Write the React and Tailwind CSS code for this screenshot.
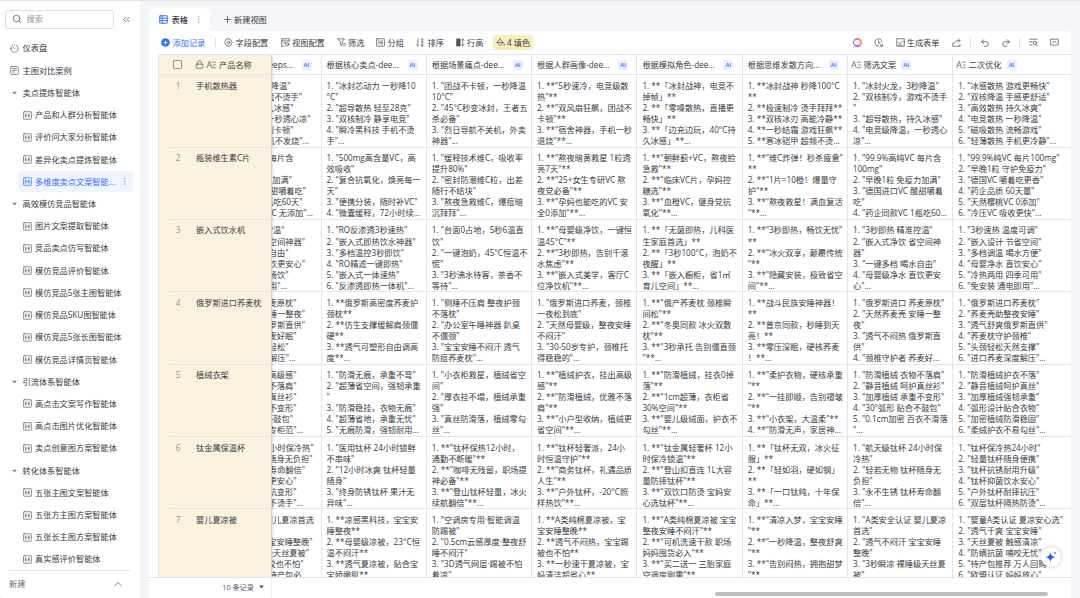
import React from 'react';
import {
  Search,
  ChevronsLeft,
  ChevronUp,
  MoreVertical,
  Plus,
  Undo2,
  Redo2,
  Lock
} from 'lucide-react';

const sidebarGroups = [
  {
    name: '卖点提炼智能体',
    items: ['产品和人群分析智能体', '评价问大家分析智能体', '差异化卖点提炼智能体', '多维度卖点文案智能...']
  },
  {
    name: '高效模仿竞品智能体',
    items: [
      '图片文案提取智能体',
      '竞品卖点仿写智能体',
      '模仿竞品评价智能体',
      '模仿竞品5张主图智能体',
      '模仿竞品SKU图智能体',
      '模仿竞品5张长图智能体',
      '模仿竞品详情页智能体'
    ]
  },
  {
    name: '引流体系智能体',
    items: ['高点击文案写作智能体', '高点击图片优化智能体', '卖点创意图方案智能体']
  },
  {
    name: '转化体系智能体',
    items: ['五张主图文案智能体', '五张方主图方案智能体', '五张长主图方案智能体', '真实感评价智能体']
  }
];

const activeItem = '多维度卖点文案智能...';

const columns = [
  { name: '根据核心卖点-dee...' },
  { name: '根据场景痛点-dee...' },
  { name: '根据人群画像-dee...' },
  { name: '根据模拟角色-dee...' },
  { name: '根据思维发散方向...' },
  { name: '筛选文案', text: true },
  { name: '二次优化', text: true }
];

// "scrolled" holds the visible tail of the column under the frozen one: [text, gap to the right border]
const rows = [
  {
    name: '手机散热器',
    scrolled: [['降温"', 30], ['戏不烫手"', 18.5], ['久冰感"', 27], ['一秒透心凉"', 10], ['别卡顿"', 27], ['机不发烧"...', 11.5]],
    cells: [
      ['1. "冰封芯动力 一秒降10', '°C"', '2. "超导散热 轻至28克"', '3. "双核制冷 静享电竞"', '4. "瞬冷黑科技 手机不烫', '手"...'],
      ['1. "团战不卡顿，一秒降温', '10°C"', '2. "45°C秒变冰封，王者五', '杀必备"', '3. "烈日导航不关机，外卖', '神器"...'],
      ['1. **"5秒速冷，电竞级散', '热"**', '2. **"双风扇狂飙，团战不', '卡顿"**', '3. **"宿舍神器，手机一秒', '退烧"**...'],
      ['1. **「冰封战神，电竞不', '掉帧」**', '2. **「零噪散热，直播更', '畅快」**', '3. **「边充边玩，40°C持', '久冰感」**...'],
      ['1. **冰封战神 秒降100°C', '**', '2. **极速制冷 烫手拜拜**', '3. **双核冰刃 高能冷静**', '4. **一秒结霜 游戏狂飙**', '5. **寒冰铠甲 超频不烫...'],
      ['1. "冰封火龙，3秒降温"', '2. "双核制冷，游戏不烫手', '"', '3. "超导散热，持久冰感"', '4. "电竞级降温，一秒透心', '凉"...'],
      ['1. "冰感散热 游戏更畅快"', '2. "双核降温 手感更舒适"', '3. "高效散热 持久冰爽"', '4. "电竞散热 一秒降温"', '5. "磁吸散热 流畅游戏"', '6. "轻薄散热 手机更冷静"...']
    ]
  },
  {
    name: '瓶装维生素C片',
    scrolled: [['每片含', 27], ['', 0], ['力加满"', 28.5], ['酸甜嚼着吃"', 14.5], ['瓶吃60天"', 18], ['VC 无添加"...', 7.5]],
    cells: [
      ['1. "500mg高含量VC，高', '效吸收"', '2. "复合抗氧化，焕亮每一', '天"', '3. "便携分装，随时补VC"', '4. "微囊缓释，72小时续...'],
      ['1. "缓释技术维C，吸收率', '提升80%"', '2. "密封防潮维C粒，出差', '随行不结块"', '3. "熬夜急救维C，爆痘暗', '沉拜拜"...'],
      ['1. **"熬夜暗黄救星 1粒透', '亮7天"**', '2. **"25+女生专研VC 熬', '夜党必备"**', '3. **"孕妈也能吃的VC 安', '全0添加"**...'],
      ['1. **"朝鲜蓟+VC，熬夜脸', '急救"**', '2. **"临床VC片，孕妈控', '糖选"**', '3. **"血橙VC，健身党抗', '氧化"**...'],
      ['1. **"维C炸弹！秒杀疲惫"', '**', '2. **"1片=10橙！爆量守', '护"**', '3. **"熬夜救星！满血复活', '"**...'],
      ['1. "99.9%高纯VC 每片含', '100mg"', '2. "早晚1粒 免疫力加满"', '3. "德国进口VC 酸甜嚼着', '吃"', '4. "药企同款VC 1瓶吃60...'],
      ['1. "99.9%纯VC 每片100mg"', '2. "早晚1粒 守护免疫力"', '3. "德国VC 嚼着吃更香"', '4. "药企品质 60天量"', '5. "天然樱桃VC 0添加"', '6. "冷压VC 吸收更快"...']
    ]
  },
  {
    name: '嵌入式饮水机',
    scrolled: [['控温"', 36], ['空间神器"', 15.5], ['自由"', 32], ['饮更安心"', 15.5], ['畅饮"', 32], ['用"...', 33.5]],
    cells: [
      ['1. "RO反渗透3秒速热"', '2. "嵌入式即热饮水神器"', '3. "多档温控3秒即饮"', '4. "RO精滤一键即热"', '5. "嵌入式一体速热"', '6. "反渗透即热一体机"...'],
      ['1. "台面0占地，5秒6温直', '饮"', '2. "一键泡奶，45°C恒温不', '慌"', '3. "3秒沸水待客，茶香不', '等待"...'],
      ['1. **"母婴级净饮，一键恒', '温45°C"**', '2. **"3秒即热，告别千滚', '水焦虑"**', '3. **"嵌入式美学，客厅C', '位净饮机"**...'],
      ['1. **「无菌即热，儿科医', '生家庭首选」**', '2. **「3秒100°C，泡奶不', '夜醒」**', '3. **「嵌入橱柜，省1㎡', '育儿空间」**...'],
      ['1. **"3秒即热，畅饮无忧"', '**', '2. **"冰火双享，颠覆传统', '"**', '3. **"隐藏安装，极致省空', '间"**...'],
      ['1. "3秒即热 精准控温"', '2. "嵌入式净饮 省空间神', '器"', '3. "一键多档 喝水自由"', '4. "母婴级净水 直饮更安', '心"...'],
      ['1. "3秒速热 温度可调"', '2. "嵌入设计 节省空间"', '3. "多档调温 喝水方便"', '4. "母婴净水 直饮安心"', '5. "冷热两用 四季可用"', '6. "免安装 通电即用"...']
    ]
  },
  {
    name: '俄罗斯进口荞麦枕',
    scrolled: [['麦原枕"', 24], ['睡一整夜"', 15.5], ['罗斯直供"', 15.5], ['麦好眠"', 24], ['轻松"', 32], ['解压"...', 25]],
    cells: [
      ['1. **俄罗斯高密度荞麦护', '颈枕**', '2. **仿生支撑缓解肩颈僵', '硬**', '3. **透气可塑形自由调高', '度**...'],
      ['1. "侧睡不压肩 整夜护颈', '不落枕"', '2. "办公室午睡神器 趴桌', '不僵颈"', '3. "宝宝安睡不闷汗 透气', '防痘荞麦枕"...'],
      ['1. "俄罗斯进口荞麦，颈椎', '一夜松到底"', '2. "天然母婴级，整夜安睡', '不闷汗"', '3. "30-50岁专护，颈椎托', '得稳稳的"...'],
      ['1. **"俄产荞麦枕 颈椎瞬', '间松"**', '2. **"冬奥同款 冰火双敷', '枕"**', '3. **"3秒承托 告别僵直颈', '"**...'],
      ['1. **战斗民族安睡神器！', '**', '2. **普京同款，秒睡到天', '亮！**', '3. **零压深眠，硬核荞麦', '！**...'],
      ['1. "俄罗斯进口 荞麦原枕"', '2. "天然荞麦壳 安睡一整', '夜"', '3. "透气不闷热 俄罗斯直', '供"', '4. "颈椎守护者 荞麦好...'],
      ['1. "俄罗斯进口荞麦枕"', '2. "荞麦壳助整夜安睡"', '3. "透气舒爽俄罗斯直供"', '4. "荞麦枕守护颈椎"', '5. "头颈轻松天然支撑"', '6. "进口荞麦深度解压"...']
    ]
  },
  {
    name: '植绒衣架',
    scrolled: [['高级感"', 24], ['不落肩"', 24], ['真丝衫"', 24], ['不变形"', 24], ['不鼓包"', 27.5], ['专柜范"...', 17.5]],
    cells: [
      ['1. "防滑无痕，承重不弯"', '2. "超薄省空间，强韧承重', '"', '3. "防滑稳挂，衣物无痕"', '4. "超薄省地，承重无忧"', '5. "无痕防滑，强韧耐用...'],
      ['1. "小衣柜救星，植绒省空', '间"', '2. "厚衣挂不塌，植绒承重', '强"', '3. "真丝防滑落，植绒零勾', '丝"...'],
      ['1. **"植绒护衣，挂出高级', '感"**', '2. **"防滑植绒，优雅不落', '肩"**', '3. **"小户型收纳，植绒更', '省空间"**...'],
      ['1. **"防滑植绒，挂衣0掉', '落"**', '2. **"1cm超薄，衣柜省', '30%空间"**', '3. **"婴儿级绒面，护衣不', '勾丝"**...'],
      ['1. **"柔护衣物，硬核承重', '"**', '2. **"一挂即顺，告别褶皱', '"**', '3. **"小衣架，大温柔"**', '4. **"防滑无声，家居神...'],
      ['1. "防滑植绒 衣物不落肩"', '2. "静音植绒 呵护真丝衫"', '3. "加厚植绒 承重不变形"', '4. "30°弧形 贴合不鼓包"', '5. "0.1cm加密 百衣不滑落', '"...'],
      ['1. "防滑植绒护衣不落"', '2. "静音植绒呵护真丝"', '3. "加厚植绒强韧承重"', '4. "弧形设计贴合衣物"', '5. "加密植绒防滑稳固"', '6. "柔绒护衣不易勾丝"...']
    ]
  },
  {
    name: '钛金属保温杯',
    scrolled: [['小时保冷热"', 7], ['随身无负担"', 8], ['寿命翻倍"', 15.5], ['更安心"', 24], ['抗变形"', 24], ['不烫手"...', 17.5]],
    cells: [
      ['1. "医用钛杯 24小时锁鲜', '不串味"', '2. "12小时冰爽 钛杯轻量', '随身"', '3. "终身防锈钛杯 果汁无', '异味"...'],
      ['1. **"钛杯保热12小时，', '通勤不断暖"**', '2. **"咖啡无残留，职场提', '神必备"**', '3. **"登山钛杯轻量，冰火', '续航翻倍"**...'],
      ['1. **"钛杯轻奢派，24小', '时恒温守护"**', '2. **"商务钛杯，礼遇品质', '人生"**', '3. **"户外钛杯，-20°C照', '样热饮"**...'],
      ['1. **"钛金属轻奢杯 12小', '时保冷锁温"**', '2. **"登山扣直连 1L大容', '量防摔钛杯"**', '3. **"双饮口防烫 宝妈安', '心选钛杯"**...'],
      ['1. **「钛杯无双，冰火征', '服」**', '2. **「轻如羽，硬如钢」', '**', '3. **「一口钛纯，十年保', '命」**...'],
      ['1. "航天级钛杯 24小时保', '冷热"', '2. "轻若无物 钛杯随身无', '负担"', '3. "永不生锈 钛杯寿命翻', '倍"...'],
      ['1. "钛杯保冷热24小时"', '2. "轻量钛杯随身便携"', '3. "钛杯抗锈耐用升级"', '4. "钛杯抑菌饮水安心"', '5. "户外钛杯耐摔抗压"', '6. "双层钛杯隔热防烫"...']
    ]
  },
  {
    name: '婴儿夏凉被',
    scrolled: [['婴儿夏凉首选', 6.5], ['', 0], ['宝安睡整晚"', 8], ['级天丝夏被"', 11.5], ['咬也不怕"', 17], ['待产包必', 19]],
    cells: [
      ['1. **凉感黑科技，宝宝安', '睡整夜**', '2. **母婴级凉被，23°C恒', '温不闷汗**', '3. **透气夏凉被，贴合宝', '宝娇嫩肌**'],
      ['1. "空调房专用·智能调温', '防踢被"', '2. "0.5cm云感厚度·整夜舒', '睡不闷汗"', '3. "3D透气网层·踢被不怕', '着凉"'],
      ['1. **A类纯棉夏凉被，宝', '宝安睡整晚**', '2. **透气不闷热，宝宝踢', '被也不怕**', '3. **一秒速干夏凉被，宝', '妈清洁超省心**'],
      ['1. **"A类纯棉夏凉被 宝宝', '整夜安睡不闷汗"**', '2. **"可机洗速干款 职场', '妈妈囤货必入"**', '3. **"买二送一 三胎家庭', '空调房刚需"**'],
      ['1. **"清凉入梦，宝宝安睡', '"**', '2. **"一秒降温，整夜舒爽', '"**', '3. **"告别闷热，拥抱甜梦', '"**'],
      ['1. "A类安全认证 婴儿夏凉', '首选"', '2. "透气不闷汗 宝宝安睡', '整晚"', '3. "3秒瞬凉 裸睡级天丝夏', '被"'],
      ['1. "婴童A类认证 夏凉安心选"', '2. "透气干爽 宝宝安睡"', '3. "天丝夏被 触感清凉"', '4. "防螨抗菌 哺咬无忧"', '5. "待产包推荐 万人回购"', '6. "欧盟认证 妈妈放心"']
    ]
  }
];

// Small outline icon on a 12x12 grid
const Glyph = ({ children, className = '' }) => (
  <svg
    viewBox="0 0 12 12"
    className={`h-[9px] w-[9px] shrink-0 ${className}`}
    fill="none"
    stroke="currentColor"
    strokeWidth="1"
    strokeLinecap="round"
    strokeLinejoin="round"
  >
    {children}
  </svg>
);

const TableIcon = ({ className }) => (
  <Glyph className={className}>
    <rect x="0.8" y="1" width="10.4" height="10" rx="0.8" />
    <path d="M3.2 4v4M5 4.2h.2M5 7.8h.2M7 4.2h1.8M7 6h1.8M7 7.8h1.8M5 6h.2" />
  </Glyph>
);

const AiBadge = ({ className = '' }) => (
  <span
    className={`flex h-[10px] w-[10px] shrink-0 items-center justify-center rounded-[2px] bg-[#eaf0ff] text-[6px] font-semibold text-[#3370ff] ${className}`}
  >
    AI
  </span>
);

const TextFieldIcon = () => (
  <span className="flex h-[10px] w-[10px] shrink-0 items-center text-[9px] leading-[10px] text-[#646a73]">
    A
    <svg viewBox="0 0 4 8" className="h-[8px] w-[4px] shrink-0" fill="none" stroke="currentColor" strokeWidth="0.8">
      <path d="M0.2 1.2h3.6M1 4h2.8M0.2 6.8h3.6" />
    </svg>
  </span>
);

const Sidebar = () => (
  <aside className="flex w-[140px] shrink-0 flex-col rounded-bl-[4px] bg-white">
    <div className="flex h-[36px] shrink-0 items-center pl-[4.5px]">
      <div className="flex h-[19px] w-[109px] items-center rounded-[3px] border border-[#dcdee2] pl-[6px] text-[#8f959e]">
        <Search className="h-[10px] w-[10px] text-[#646a73]" strokeWidth={2} />
        <span className="ml-[5px]">搜索</span>
      </div>
      <ChevronsLeft className="ml-[7px] h-[11px] w-[11px] text-[#646a73]" strokeWidth={2} />
    </div>
    <div className="flex h-[533px] shrink-0 flex-col pt-[0.4px]">
      <div className="flex h-[22.2px] shrink-0 items-center pl-[9.5px]">
        <Glyph className="text-[#646a73]">
          <path d="M3.6 1.8A4.9 4.9 0 1 0 8.4 1.8M6 6.2L4.2 4.4M1.2 6.2h1M6 1.1v.4" />
        </Glyph>
        <span className="ml-[4px]">仪表盘</span>
      </div>
      <div className="flex h-[22.2px] shrink-0 items-center pl-[9.5px]">
        <Glyph className="text-[#646a73]">
          <rect x="1" y="0.8" width="10" height="10.4" rx="1" />
          <path d="M3.5 3.6h5M3.5 5.8h5M3.5 8h2.4" />
        </Glyph>
        <span className="ml-[4px]">主图对比案例</span>
      </div>
      {sidebarGroups.map((group) => (
        <React.Fragment key={group.name}>
          <div className="flex h-[22.22px] shrink-0 items-center pl-[11.5px]">
            <svg viewBox="0 0 6 4" className="h-[4px] w-[5px]" fill="#7c828b">
              <path d="M0.3 0.4h5.4L3 3.8z" />
            </svg>
            <span className="ml-[6px]">{group.name}</span>
          </div>
          {group.items.map((item) => {
            const active = item === activeItem;
            return (
              <div key={item} className="flex h-[22.22px] shrink-0 items-center pr-[7px] pl-[17.5px]">
                <div
                  className={`flex h-[21px] w-full items-center rounded-[3px] pl-[5px] ${
                    active ? 'bg-[#f0f4ff] text-[#3370ff]' : ''
                  }`}
                >
                  <TableIcon className={active ? 'text-[#3370ff]' : 'text-[#646a73]'} />
                  <span className="ml-[3.5px] whitespace-nowrap">{item}</span>
                  {active && <MoreVertical className="mr-[4.5px] ml-auto h-[9px] w-[9px] text-[#8f959e]" strokeWidth={1.6} />}
                </div>
              </div>
            );
          })}
        </React.Fragment>
      ))}
    </div>
    <div className="mr-[10px] ml-[9px] flex h-[27px] items-center justify-between border-t border-[#e3e5e8] text-[#646a73]">
      <span>新建</span>
      <ChevronUp className="mr-[6px] h-[12px] w-[12px]" strokeWidth={1.8} />
    </div>
  </aside>
);

const TabBar = () => (
  <div className="flex h-[30px] shrink-0 items-end">
    <div className="flex h-[23px] w-[61px] items-center rounded-t-[5px] bg-white pl-[10px]">
      <Glyph className="text-[#3370ff]">
        <rect x="1" y="1" width="10" height="10" rx="0.6" strokeWidth="1.3" />
        <path d="M1 4.3h10M1 7.6h10M4.2 1v10" strokeWidth="1.3" />
      </Glyph>
      <span className="ml-[3.5px] font-medium">表格</span>
      <MoreVertical className="ml-[6px] h-[9px] w-[9px] text-[#8f959e]" strokeWidth={1.6} />
    </div>
    <div className="flex h-[23px] items-center pl-[11.5px]">
      <Plus className="h-[11px] w-[11px] text-[#51565d]" strokeWidth={1.8} />
      <span className="ml-[1.5px]">新建视图</span>
    </div>
  </div>
);

const Tool = ({ width, label, children }) => (
  <div className="flex shrink-0 items-center" style={{ width }}>
    {children}
    <span className="ml-[2.5px] whitespace-nowrap">{label}</span>
  </div>
);

const Toolbar = () => (
  <div className="flex h-[23px] shrink-0 items-center pr-[11px] pl-[12px]">
    <div className="flex w-[54px] items-center text-[#3370ff]">
      <svg viewBox="0 0 12 12" className="h-[9px] w-[9px]">
        <circle cx="6" cy="6" r="5.8" fill="#3370ff" />
        <path d="M6 3.4v5.2M3.4 6h5.2" stroke="#fff" strokeWidth="1.3" />
      </svg>
      <span className="ml-[2.5px]">添加记录</span>
    </div>
    <div className="mr-[8px] h-[9px] w-px bg-[#dee0e3]"></div>
    <Tool width={56.5} label="字段配置">
      <Glyph className="text-[#51565d]">
        <path d="M4 1.2h4L11 6l-3 4.8H4L1 6z" />
        <circle cx="6" cy="6" r="1.8" />
      </Glyph>
    </Tool>
    <Tool width={56} label="视图配置">
      <Glyph className="text-[#51565d]">
        <path d="M11 4.5V1H1v10h3M1 3.8h10M3.4 6.4h2" />
        <circle cx="8.3" cy="8.4" r="2.3" />
        <path d="M8.3 8.3v.2" />
      </Glyph>
    </Tool>
    <Tool width={39.5} label="筛选">
      <Glyph className="text-[#51565d]">
        <path d="M1 1.2h9L6.8 5.4v5L4.4 9V5.4zM9 7.2h2M9 9.6h2" />
      </Glyph>
    </Tool>
    <Tool width={40} label="分组">
      <Glyph className="text-[#51565d]">
        <rect x="0.8" y="1" width="10.4" height="10" rx="0.8" />
        <path d="M3.2 4h.2M3.2 6h.2M3.2 8h.2M5.4 4h3.4M5.4 6h3.4M5.4 8h3.4" />
      </Glyph>
    </Tool>
    <Tool width={39.5} label="排序">
      <Glyph className="text-[#51565d]">
        <path d="M2.5 1v10L.8 9.2M6.6 2.2C6.8.6 9.8.8 9.4 2.4 9.2 3.6 7 4.4 6.6 5.2h3.2M8.2 6.8v4.2M6.6 9.2L8.2 11l1.7-1.8" />
      </Glyph>
    </Tool>
    <Tool width={37} label="行高">
      <Glyph className="text-[#51565d]">
        <path d="M1 1.2h4.4v9.6H1zM1 4h4.4M1 6h4.4M1 8h4.4" fill="currentColor" />
        <path d="M9 1.4v9.2M7.7 2.8L9 1.4l1.3 1.4M7.7 9.2L9 10.6l1.3-1.4" />
      </Glyph>
    </Tool>
    <div className="flex h-[15px] w-[40px] items-center rounded-[3px] bg-[#fbebbf] pl-[3px]">
      <Glyph className="text-[#51565d]">
        <path d="M4.6 1l5 4.800L5.400 10 1 5.600 5.400 1.800M1.400 6h8M10.800 7.800v2.400" />
      </Glyph>
      <span className="ml-[2.5px] whitespace-nowrap">4 填色</span>
    </div>
    <div className="ml-auto flex items-center text-[#51565d]">
      <div className="mr-[12px] flex h-[9px] w-[9px] items-center justify-center rounded-full bg-[conic-gradient(#ff7a5c,#ffa25e,#e667d8,#7a6bff,#b36bff,#ff7a5c)]">
        <div className="h-[5.5px] w-[5.5px] rounded-full bg-white"></div>
      </div>
      <Glyph className="mr-[13px]">
        <path d="M10.6 5A4.8 4.8 0 1 0 6.4 10.8M6 3.4v3h2.2M7.6 8l3.4 3M11 8.4V11H8.6" />
      </Glyph>
      <Glyph>
        <path d="M11 5V11H1V1h10v4zM3.6 5.6l1.8 2 3.4-3.4M3 9.4h5" />
      </Glyph>
      <span className="ml-[2px] whitespace-nowrap text-[#363a42]">生成表单</span>
      <Glyph className="ml-[12px]">
        <path d="M1 7v4h9.6V8.6M2.4 7.6c.4-2.6 2.6-4 5.6-4h2.4M8.4 1.2l2.4 2.4-2.4 2.4" />
      </Glyph>
      <div className="mr-[9px] ml-[9px] h-[9px] w-px bg-[#dee0e3]"></div>
      <Undo2 className="mr-[11px] h-[10px] w-[10px]" strokeWidth={1.9} />
      <Redo2 className="h-[10px] w-[10px]" strokeWidth={1.9} />
      <div className="mr-[9.5px] ml-[8px] h-[9px] w-px bg-[#dee0e3]"></div>
      <Glyph className="mr-[12px]">
        <path d="M1 1.6h10M1 5h3M1 9.4h3M9.4 8.6l1.8 2" />
        <circle cx="7.8" cy="6.6" r="2.3" />
      </Glyph>
      <Glyph className="mr-px">
        <path d="M1 1.6h10v7.6H7.4L6 10.8 4.6 9.2H1zM3.8 5.2h4.4" />
      </Glyph>
    </div>
  </div>
);

const FrozenColumn = () => (
  <div className="z-10 flex h-full w-[112.5px] shrink-0 flex-col border-r border-[#d5d3cc] bg-[#faf2df] shadow-[1px_0_2px_rgba(31,35,41,0.15)]">
    <div className="flex h-[20.4px] shrink-0 items-center border-b border-[#e3e3df] pl-[14px]">
      <div className="h-[9px] w-[9px] rounded-[1px] border border-[#8f959e]"></div>
      <Lock className="ml-[13px] h-[9px] w-[9px] text-[#646a73]" strokeWidth={2.2} />
      <span className="ml-[2.5px] flex items-center">
        <TextFieldIcon />
      </span>
      <span className="ml-[2.5px]">产品名称</span>
    </div>
    {rows.map((row, i) => (
      <div key={row.name} className="ml-[10px] flex h-[72.35px] shrink-0 border-b border-[#e6e5e0] pt-[4.4px] leading-[11.05px]">
        <span className="w-[18px] text-center text-[#8f959e]">{i + 1}</span>
        <span className="ml-[9px] whitespace-nowrap">{row.name}</span>
      </div>
    ))}
  </div>
);

const ScrolledColumn = () => (
  <div className="flex w-[50px] shrink-0 flex-col border-r border-[#e3e5e8]">
    <div className="flex h-[20.4px] shrink-0 items-center justify-end overflow-hidden border-b border-[#e3e5e8] pr-[9px]">
      <span className="shrink-0">eeps...</span>
      <AiBadge className="ml-[8.5px]" />
    </div>
    {rows.map((row) => (
      <div key={row.name} className="h-[72.35px] shrink-0 overflow-hidden border-b border-[#e3e5e8] pt-[4.4px]">
        {row.scrolled.map(([text, gap], i) => (
          <div key={i} className="flex h-[11.05px] justify-end leading-[11.05px]" style={{ paddingRight: gap }}>
            <span className="shrink-0 whitespace-pre">{text}</span>
          </div>
        ))}
      </div>
    ))}
  </div>
);

const Grid = () => (
  <div className="ml-[9px] flex h-[523px] shrink-0 overflow-hidden border-t border-l border-[#e3e5e8]">
    <FrozenColumn />
    <ScrolledColumn />
    {columns.map((col, c) => (
      <div
        key={col.name}
        className={`flex shrink-0 flex-col ${
          c === columns.length - 1 ? 'w-[118px]' : 'w-[105.3px] border-r border-[#e3e5e8]'
        }`}
      >
        <div className={`flex h-[20.4px] shrink-0 items-center border-b border-[#e3e5e8] ${col.text ? 'pl-[3px]' : 'pl-[5px]'}`}>
          {col.text && <TextFieldIcon />}
          <span className={`whitespace-nowrap ${col.text ? 'ml-[2.5px]' : 'w-[81px]'}`}>{col.name}</span>
          <AiBadge className={col.text ? 'ml-[5px]' : ''} />
        </div>
        {rows.map((row) => (
          <div
            key={row.name}
            className="h-[72.35px] shrink-0 overflow-hidden border-b border-[#e3e5e8] pt-[4.4px] pl-[5px] leading-[11.05px] whitespace-pre"
          >
            {row.cells[c].map((line, i) => (
              <div key={i} className="h-[11.05px]">{line}</div>
            ))}
          </div>
        ))}
      </div>
    ))}
  </div>
);

const App = () => (
  <div className="relative flex h-[598px] w-[1080px] overflow-hidden border-t border-[#e4e5e8] bg-[#f4f5f8] font-['Open_Sans','Noto_Sans_CJK_SC',sans-serif] text-[8.2px] leading-[12px] text-[#363a42]">
    <Sidebar />
    <main className="ml-[9px] flex w-[922px] flex-col">
      <TabBar />
      <div className="flex flex-1 flex-col overflow-hidden rounded-tr-[5px] bg-white">
        <Toolbar />
        <Grid />
        <div className="flex min-h-0 flex-1 border-t border-[#e3e5e8]">
          <div className="flex w-[123px] items-start justify-end border-r border-[#eff0f1] pt-[3px] pr-[7px] text-[7.2px] text-[#51565d]">
            <span>10 条记录</span>
            <svg viewBox="0 0 6 4" className="mt-[4px] ml-[5px] h-[4px] w-[5px]" fill="#51565d">
              <path d="M0.2 0.3h5.6L3 3.8z" />
            </svg>
          </div>
          <div className="flex flex-1 items-end justify-end pr-[23px] pb-[2px]">
            <div className="h-[4px] w-[333px] rounded-full bg-[#bfbfbf]"></div>
          </div>
        </div>
      </div>
    </main>
    {/* Floating assistant button */}
    <div className="absolute top-[546px] left-[1041px] z-20 flex h-[20px] w-[20px] items-center justify-center rounded-full bg-white shadow-[0_0_4px_rgba(31,35,41,0.25)]">
      <svg viewBox="0 0 12 12" className="h-[12px] w-[12px]" fill="#245bff">
        <path d="M5.4 1.6c.6 2.9 1.700 4 4.700 4.700-3 .7-4.100 1.800-4.700 4.700C4.800 8.100 3.700 7 .7 6.300c3-.7 4.100-1.800 4.700-4.700z" />
        <path d="M10 .6c.2 1 .5 1.300 1.500 1.500-1 .2-1.300.5-1.500 1.500-.2-1-.5-1.300-1.500-1.500C9.500 1.900 9.800 1.600 10 .6z" />
      </svg>
    </div>
  </div>
);

export default App;
